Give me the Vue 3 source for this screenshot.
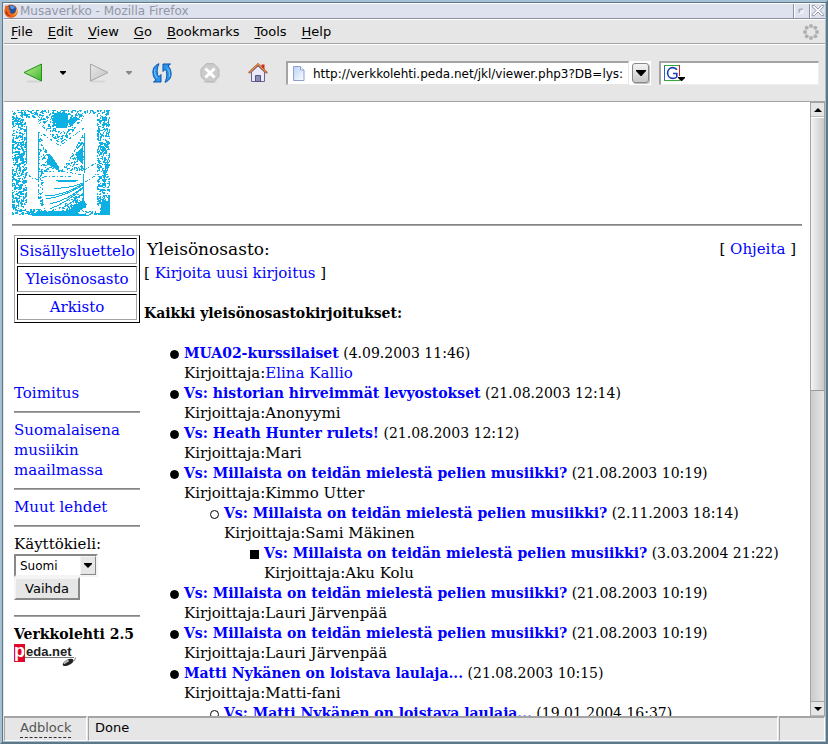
<script setup>
import { ref } from 'vue'

const menus = ['File', 'Edit', 'View', 'Go', 'Bookmarks', 'Tools', 'Help']
const address = ref('http://verkkolehti.peda.net/jkl/viewer.php3?DB=lys:')
const query = ref('')
const language = ref('Suomi')
const sections = ['Sisällysluettelo', 'Yleisönosasto', 'Arkisto']

const millaista = 'Vs: Millaista on teidän mielestä pelien musiikki?'
const posts = [
  { title: 'MUA02-kurssilaiset', date: '4.09.2003 11:46', author: 'Elina Kallio', mail: true },
  { title: 'Vs: historian hirveimmät levyostokset', date: '21.08.2003 12:14', author: 'Anonyymi' },
  { title: 'Vs: Heath Hunter rulets!', date: '21.08.2003 12:12', author: 'Mari' },
  {
    title: millaista, date: '21.08.2003 10:19', author: 'Kimmo Utter',
    replies: [{
      title: millaista, date: '2.11.2003 18:14', author: 'Sami Mäkinen',
      replies: [{ title: millaista, date: '3.03.2004 21:22', author: 'Aku Kolu' }],
    }],
  },
  { title: millaista, date: '21.08.2003 10:19', author: 'Lauri Järvenpää' },
  { title: millaista, date: '21.08.2003 10:19', author: 'Lauri Järvenpää' },
  {
    title: 'Matti Nykänen on loistava laulaja...', date: '21.08.2003 10:15', author: 'Matti-fani',
    replies: [{ title: 'Vs: Matti Nykänen on loistava laulaja...', date: '19.01.2004 16:37' }],
  },
]

// Speckled texture behind the letter of the site emblem.
function speckle(w, h) {
  let seed = 20031
  const rnd = () => {
    seed = (seed * 1103515245 + 12345) % 2147483648
    return seed / 2147483648
  }
  const grid = Array.from({ length: h + 1 }, () => Array.from({ length: w + 1 }, rnd))
  let d = ''
  for (let y = 0; y < h; y++) {
    for (let x = 0; x < w; x++) {
      const v = grid[y][x] * 0.5 + grid[y][x + 1] * 0.25 + grid[y + 1][x] * 0.25
      const middle = x > 26 && x < 72
      const limit = middle ? (y > 20 && y < 90 ? 0.6 : 0.54) : 0.49
      if (v > limit) d += `M${x} ${y}h1v1h-1z`
    }
  }
  return d
}
const texture = speckle(98, 105)
</script>

<template>
  <div class="window">
    <header class="titlebar">
      <svg class="fox" viewBox="0 0 16 16" aria-hidden="true">
        <circle cx="8" cy="8" r="7.5" fill="#e2581c" />
        <circle cx="8.6" cy="6.6" r="5.2" fill="#1f4f9e" />
        <path d="M7 2.200c2-1 4.600-.2 5.500 1.800L10 6 7.500 5z" fill="#4c9ae0" />
        <path d="M1 4l1-3 2 2 2 .4L5.500 6l2 1.500L6.500 9l3 2.500 3.500-2 1-4.500 1.300 4C15 13 12 15.500 8 15.500S.8 12.500.6 9z" fill="#e8641b" />
        <path d="M13.500 4.500c1.500 4-1 8-5 8.500 4 .8 7-2.500 6.800-5.500z" fill="#f7b733" />
        <path d="M1.500 9.500c1 3 4 5 7 4.500C5 13 3.500 11 3.400 8z" fill="#b5260f" />
      </svg>
      <span class="title">Musaverkko - Mozilla Firefox</span>
      <button class="wm" aria-label="Minimise">
        <svg viewBox="0 0 16 14"><path d="M5.500 9.500v-4h4" stroke="#8d90a0" fill="none" /><path d="M6 9.500h3.500V6" stroke="#fff" fill="none" /></svg>
      </button>
      <button class="wm" aria-label="Close">
        <svg viewBox="0 0 16 14"><path d="M2.500 1.500h2l4 4 4-4h2v1l-4 4.500 4 4v1.500h-2l-4-4-4 4h-2V11l4-4-4-4z" fill="#fff" stroke="#8d90a0" /></svg>
      </button>
    </header>

    <nav class="menubar">
      <button v-for="m in menus" :key="m" class="menu"><u>{{ m[0] }}</u>{{ m.slice(1) }}</button>
      <svg class="throbber" viewBox="0 0 16 16" aria-hidden="true">
        <g fill="#b0b0b0">
          <circle cx="8" cy="2" r="2" /><circle cx="12.300" cy="3.700" r="2" /><circle cx="14" cy="8" r="2" /><circle cx="12.300" cy="12.300" r="2" />
          <circle cx="8" cy="14" r="2" /><circle cx="3.700" cy="12.300" r="2" /><circle cx="2" cy="8" r="2" /><circle cx="3.700" cy="3.700" r="2" />
        </g>
      </svg>
    </nav>

    <div class="toolbar">
      <div class="tools">
        <button class="tool" aria-label="Back">
          <svg viewBox="0 0 20 20">
            <defs><linearGradient id="green" x1="0" y1="0" x2="1" y2="1"><stop offset="0" stop-color="#c4f09a" /><stop offset="1" stop-color="#3fb52c" /></linearGradient></defs>
            <ellipse cx="11" cy="18.500" rx="8" ry="1" fill="#d2d2d2" />
            <path d="M1 9.500L18.500 1v17z" fill="url(#green)" stroke="#1c9417" stroke-linejoin="round" />
          </svg>
        </button>
        <button class="drop" aria-label="Back history"><svg viewBox="0 0 6 4"><path d="M0 0h6v1L3 4 0 1z" fill="#000" /></svg></button>
        <button class="tool" aria-label="Forward">
          <svg viewBox="0 0 20 20">
            <defs><linearGradient id="gray" x1="0" y1="0" x2="1" y2="1"><stop offset="0" stop-color="#e8e8e8" /><stop offset="1" stop-color="#c2c2c2" /></linearGradient></defs>
            <ellipse cx="9" cy="18.500" rx="8" ry="1" fill="#d4d4d4" />
            <path d="M1.500 1L19 9.500 1.500 18z" fill="url(#gray)" stroke="#a5a5a5" stroke-linejoin="round" />
          </svg>
        </button>
        <button class="drop dim" aria-label="Forward history"><svg viewBox="0 0 6 4"><path d="M0 0h6v1L3 4 0 1z" fill="#888" /></svg></button>
        <button class="tool reload" aria-label="Reload">
          <svg viewBox="0 0 20 20">
            <g fill="#2797ee" stroke="#0b4fa8" stroke-linejoin="round">
              <path d="M7 .7C2 2.500.5 6.500 1 10.500c.3 3 1.500 5 3 6.500L1.500 19H9v-7.500l-2.200 2.300C4.800 11.500 4.500 6 7 .7z" />
              <path d="M13 19.300c5-1.800 6.500-5.800 6-9.800-.3-3-1.500-5-3-6.500L18.500 1H11v7.500l2.200-2.300c2 2.300 2.300 7.800-.2 13.100z" />
            </g>
            <path d="M3 6c-.8 3-.3 6 2 9M17.300 14c.6-3 .3-5.500-1.800-8.500" stroke="#7cc8fb" fill="none" />
          </svg>
        </button>
        <button class="tool stop" aria-label="Stop">
          <svg viewBox="0 0 20 20">
            <ellipse cx="10" cy="19" rx="7" ry="1" fill="#d0d0d0" />
            <path d="M6.200.7h7.600L19 6v7.500l-5.200 5.200H6.200L1 13.500V6z" fill="#cbcbcb" stroke="#b6b6b6" />
            <path d="M6.500 6.500l7 7M13.500 6.500l-7 7" stroke="#fff" stroke-width="3" stroke-linecap="square" />
          </svg>
        </button>
        <button class="tool home" aria-label="Home">
          <svg viewBox="0 0 20 20">
            <path d="M13.500 1.500h3V7h-3z" fill="#d9281c" />
            <path d="M3.500 9L10 3l6.500 6v9.500h-13z" fill="#e9e9fb" stroke="#67648f" />
            <path d="M.8 10L10 1.300 19.200 10" fill="none" stroke="#a9562a" stroke-width="2" />
            <path d="M1.500 9.200L10 1.300 18.500 9.200" fill="none" stroke="#f0a05c" />
            <path d="M7.500 12.500h5v6h-5z" fill="#8c8cb4" stroke="#55537f" />
          </svg>
        </button>
      </div>
      <div class="address">
        <label class="url">
          <svg viewBox="0 0 12 15" aria-hidden="true">
            <defs><linearGradient id="sheet" x1="0" y1="0" x2="1" y2="1"><stop offset="0" stop-color="#b9d4f7" /><stop offset="1" stop-color="#fbfdff" /></linearGradient></defs>
            <path d="M.5.500h7l3.500 3.500v10.500H.5z" fill="url(#sheet)" stroke="#8f9fce" /><path d="M7.500.500V4H11" fill="#fff" stroke="#8f9fce" />
          </svg>
          <input v-model="address" aria-label="Address" />
        </label>
        <button class="history" aria-label="Address history"><svg viewBox="0 0 10 6"><path d="M0 0h10v1L5.500 6h-1L0 1z" /></svg></button>
      </div>
      <label class="search">
        <svg viewBox="0 0 21 17" aria-hidden="true">
          <path d="M0 0h16v16H0z" fill="#fff" /><path d="M.5 16V0" stroke="#2c5fd0" /><path d="M0 .5h16M0 15.500h16" stroke="#35a835" /><path d="M15.500 0v11" stroke="#d02020" />
          <path d="M13 4.800C11.800 3.200 10.500 2.600 8.800 2.600 5.500 2.600 3.600 5 3.600 8s1.900 5.400 5.200 5.400c1.700 0 3-.5 4-1.400V8.500H9" fill="none" stroke="#1d3fb5" stroke-width="1.600" />
          <path d="M14 12h7v1l-3 3h-1l-3-3z" fill="#000" />
        </svg>
        <input v-model="query" aria-label="Search" />
      </label>
    </div>

    <div class="view">
      <main class="page">
        <svg class="emblem" viewBox="0 0 99 106" role="img" aria-label="M" shape-rendering="crispEdges">
          <g fill="#0cb0e2">
            <path :d="texture" />
            <path d="M43 3h12l2 9-3 8H43l2-6-5-3zM56 10l8-4 2 3-8 8zM18 104l12-3h25l20-14v8l-10 8 14 3H20zM90 91h8v14H87z" />
          </g>
          <path fill="#fff" d="M13 8h11l3 5 9 10 12 11 6-4L71 9l2-5h12v90l4 7H72l3-6-3-5V24L57 50l-8 11-9-14-9-11-1-12-4-3v67l4 11H12l3-7V50l-3-4 3-6V16z" />
          <path fill="#fff" d="M33 62l38-1v19L48 97l-13 5-5-14z" />
          <path fill="#fff" d="M44 18h12v3H44z" />
          <path fill="none" stroke="#0cb0e2" d="M26.500 22v48M14.500 16v36M72.500 23v40M71.500 64v33M86.500 16v14" />
          <path fill="none" stroke="#0cb0e2" d="M44 70h22M46 71h18M42 78q14 1 29-5M33 86q18 0 38-12M34 89q20-3 37-14M38 94q18-4 33-17M38 99q18-7 34-22M50 98q12-6 22-16" />
          <path fill="none" stroke="#0cb0e2" stroke-dasharray="3 2 1 2" d="M32 66h28M50 61l20 4M56 54l15 7M31 24l17 12 24-18M49 62l8-11 14-26M72 60l12-7 7-3M73 72l10-6 5-9M12 58l7 10 10 2" />
          <path fill="#0cb0e2" d="M65 42l6-6v18l-6-5zM36 44l3 1 8 12v4l-12-7z" />
        </svg>
        <hr>
        <div class="columns">
          <aside class="side">
            <table class="sections">
              <tbody><tr v-for="s in sections" :key="s"><td><a href="#">{{ s }}</a></td></tr></tbody>
            </table>
            <div class="links">
              <a href="#">Toimitus</a>
              <hr>
              <a href="#">Suomalaisena musiikin maailmassa</a>
              <hr>
              <a href="#">Muut lehdet</a>
              <hr>
            </div>
            <form class="language" @submit.prevent>
              <label for="lang">Käyttökieli:</label>
              <span class="picker">
                <select id="lang" v-model="language"><option>Suomi</option></select>
                <span class="arrow"><svg viewBox="0 0 8 5"><path d="M0 0h8v1L4 5 0 1z" /></svg></span>
              </span>
              <button class="submit">Vaihda</button>
            </form>
            <hr>
            <b class="version">Verkkolehti 2.5</b>
            <a class="peda" href="#">
              <span class="p">p</span><span class="rest">eda.net</span>
              <svg viewBox="0 0 52 10" aria-hidden="true">
                <path d="M0 .5h50M51.500.500q0 2-2 4" stroke="#777" fill="none" />
                <ellipse cx="44" cy="5.500" rx="6" ry="2.800" transform="rotate(-28 44 5.500)" fill="#222" /><path d="M39.500 6.500l5-3" stroke="#bbb" stroke-width="2" />
              </svg>
            </a>
          </aside>

          <section class="letters">
            <div class="heading">
              <h1>Yleisönosasto:</h1>
              <span>[ <a href="#">Ohjeita</a> ]</span>
            </div>
            <p class="write">[ <a href="#">Kirjoita uusi kirjoitus</a> ]</p>
            <h2>Kaikki yleisönosastokirjoitukset:</h2>
            <ul class="thread">
              <li v-for="(p, i) in posts" :key="i">
                <div class="subject"><a href="#"><b>{{ p.title }}</b></a> ({{ p.date }})</div>
                <div class="author">Kirjoittaja:<a v-if="p.mail" href="#">{{ p.author }}</a><template v-else>{{ p.author }}</template></div>
                <ul v-if="p.replies">
                  <li v-for="r in p.replies" :key="r.date">
                    <div class="subject"><a href="#"><b>{{ r.title }}</b></a> ({{ r.date }})</div>
                    <div v-if="r.author" class="author">Kirjoittaja:{{ r.author }}</div>
                    <ul v-if="r.replies">
                      <li v-for="s in r.replies" :key="s.date">
                        <div class="subject"><a href="#"><b>{{ s.title }}</b></a> ({{ s.date }})</div>
                        <div class="author">Kirjoittaja:{{ s.author }}</div>
                      </li>
                    </ul>
                  </li>
                </ul>
              </li>
            </ul>
          </section>
        </div>
      </main>
      <div class="scrollbar">
        <button aria-label="Scroll up"><svg viewBox="0 0 8 4"><path d="M4 0l4 4H0z" /></svg></button>
        <div class="track"><div class="thumb"></div></div>
        <button aria-label="Scroll down"><svg viewBox="0 0 8 4"><path d="M0 0h8L4 4z" /></svg></button>
      </div>
    </div>

    <footer class="status">
      <div class="panel adblock"><span>Adblock</span></div>
      <div class="panel message">Done</div>
      <div class="panel grip"></div>
    </footer>
  </div>
</template>

<style>
body { margin: 0; }
</style>

<style scoped>
* { box-sizing: border-box; }
button, input, select { font: inherit; color: inherit; margin: 0; padding: 0; border: 0; background: none; border-radius: 0; outline: none; }
svg { display: block; }

.window {
  height: 100vh;
  display: flex;
  flex-direction: column;
  border: 2px solid;
  border-color: #a4c0d2 #5f7888 #5f7888 #a4c0d2;
  background: #e6e6e6;
  box-shadow: inset 1px 1px #5f7888, inset -1px -1px #a4c0d2;
  padding: 1px 1px 1px 2px;
  font: 13px/16px "DejaVu Sans", sans-serif;
  color: #000;
}

.titlebar { display: flex; align-items: center; height: 16px; flex: none; background: #dee2ef; border-top: 1px solid #fff; border-bottom: 1px solid #8c8e9e; }
.fox { width: 14px; height: 14px; flex: none; }
.title { flex: 1; padding-left: 2px; font-size: 12px; line-height: 14px; color: #9296a6; }
.wm { width: 16px; height: 14px; border-left: 1px solid #8c8e9e; box-shadow: inset 1px 0 #fff; }

.menubar { display: flex; align-items: center; height: 25px; flex: none; border-top: 1px solid #fff; border-bottom: 1px solid #a4a4a4; padding: 0 6px 0 7px; gap: 15px; }
.menu u { text-underline-offset: 2px; }
.throbber { width: 16px; height: 16px; margin-left: auto; }

.toolbar { display: flex; align-items: center; height: 58px; flex: none; border-top: 1px solid #fff; border-bottom: 1px solid #a4a4a4; padding: 0 6px 0 19px; gap: 8px; }
.tools { display: flex; align-items: center; width: 255px; flex: none; }
.tool { width: 20px; height: 20px; }
.tool svg { width: 20px; height: 20px; }
.drop { width: 46px; display: flex; justify-content: flex-start; padding-left: 17px; }
.drop svg { width: 6px; height: 4px; }
.dim { width: 43px; }
.stop { margin-left: 28px; }
.home { margin-left: 28px; }
.address { flex: 1; display: flex; min-width: 0; background: #fff; }
.url { flex: 1; display: flex; align-items: center; min-width: 0; height: 24px; border: 1px solid #e6e6e6; border-top: 2px solid #a4a4a4; border-left: 2px solid #a4a4a4; padding-left: 5px; gap: 8px; font-size: 12px; }
.url svg { width: 12px; height: 15px; flex: none; }
.url input { flex: 1; min-width: 0; height: 20px; }
.history { width: 17px; height: 20px; margin: 2px 2px 2px 3px; border: 1px solid #888; border-radius: 3px; background: linear-gradient(#f4f4f4, #c8c8c8); display: flex; align-items: center; justify-content: center; box-shadow: 1px 1px #bbb; }
.history svg { width: 10px; height: 6px; }
.search { width: 160px; height: 24px; flex: none; display: flex; align-items: center; gap: 4px; background: #fff; border: 1px solid #eee; border-top: 2px solid #a4a4a4; border-left: 2px solid #a4a4a4; padding-left: 3px; }
.search svg { width: 21px; height: 17px; flex: none; }
.search input { flex: 1; min-width: 0; }

.view { flex: 1; display: flex; min-height: 0; }
.page { flex: 1; min-width: 0; overflow: hidden; background: #fff; padding: 8px; font: 15px/20px "DejaVu Serif", serif; }
a { color: #0000ff; text-decoration: none; }
.emblem { width: 99px; height: 106px; }
hr { height: 2px; border: 0; margin: 8px 0 7px; background: #a4a4a4; border-top: 1px solid #858585; }
.columns { display: flex; gap: 4px; padding: 2px 3px 0 2px; }
.side { width: 126px; flex: none; }
.sections { width: 100%; border-collapse: separate; border-spacing: 2px; border: 1px solid; border-color: #a4a4a4 #000 #000 #a4a4a4; margin-bottom: 60px; line-height: 20px; }
.sections td { height: 26px; padding: 2px 0; text-align: center; border: 1px solid; border-color: #000 #a4a4a4 #a4a4a4 #000; }
.links a { display: block; }
.language { display: flex; flex-direction: column; align-items: flex-start; padding-bottom: 7px; }
.picker { display: flex; width: 84px; height: 23px; border: 2px solid; border-color: #888 #f4f4f4 #f4f4f4 #888; font: 12px/18px "DejaVu Sans", sans-serif; }
.picker select { appearance: none; flex: 1; min-width: 0; padding-left: 4px; }
.arrow { width: 16px; background: #e6e6e6; border: 1px solid; border-color: #f4f4f4 #888 #888 #f4f4f4; display: flex; align-items: center; justify-content: center; }
.arrow svg { width: 8px; height: 5px; }
.submit { width: 66px; height: 23px; border: 2px solid; border-color: #f4f4f4 #888 #888 #f4f4f4; background: #e6e6e6; font: 13px/18px "DejaVu Sans", sans-serif; }
.version { display: block; white-space: nowrap; font-size: 14px; }
.peda { display: grid; grid-template-columns: 11px 51px; grid-template-rows: 13px 10px; width: 62px; font: bold 13px/13px "Liberation Sans", sans-serif; color: #222; }
.p { grid-row: 1 / 3; height: 18px; background: #e0062c; color: #fff; font-size: 18px; line-height: 14px; text-align: center; }
.rest { padding-left: 1px; line-height: 15px; }

.letters { flex: 1; min-width: 0; }
.heading { display: flex; justify-content: space-between; align-items: center; padding: 0 3px; height: 28px; }
h1 { margin: 0; font-size: 17px; font-weight: 400; line-height: 24px; }
.write { margin: 0 0 20px; }
h2 { margin: 0 0 20px; font-size: 14px; line-height: 20px; }
ul { margin: 0; padding-left: 40px; list-style: none; }
li { position: relative; }
li::before { content: ""; position: absolute; left: -14px; top: 7px; width: 7px; height: 7px; border: 1px solid #000; border-radius: 50%; background: #000; }
ul ul > li::before { background: #fff; }
ul ul ul > li::before { border-radius: 0; background: #000; }
.subject { white-space: nowrap; font-size: 14px; }

.scrollbar { width: 15px; flex: none; display: flex; flex-direction: column; border-left: 1px solid #a4a4a4; border-right: 1px solid #a4a4a4; }
.scrollbar button { height: 15px; display: flex; align-items: center; justify-content: center; background: #e6e6e6; border-bottom: 1px solid #bbb; border-top: 1px solid #a4a4a4; }
.scrollbar button svg { width: 8px; height: 4px; }
.track { flex: 1; background: linear-gradient(90deg, #ccc, #e6e6e6); }
.thumb { height: 47%; background: linear-gradient(90deg, #f4f4f4, #c9c9c9); border-top: 1px solid #fff; border-bottom: 1px solid #999; }

.status { display: flex; height: 25px; flex: none; gap: 1px; }
.panel { border: 1px solid #fff; border-top: 2px solid #a4a4a4; border-left: 1px solid #a4a4a4; line-height: 20px; padding-left: 6px; }
.adblock { width: 83px; padding-left: 15px; color: #555; }
.adblock span { display: inline-block; line-height: 18px; border-bottom: 1px dashed #333; }
.message { flex: 1; }
.grip { width: 46px; }
</style>
